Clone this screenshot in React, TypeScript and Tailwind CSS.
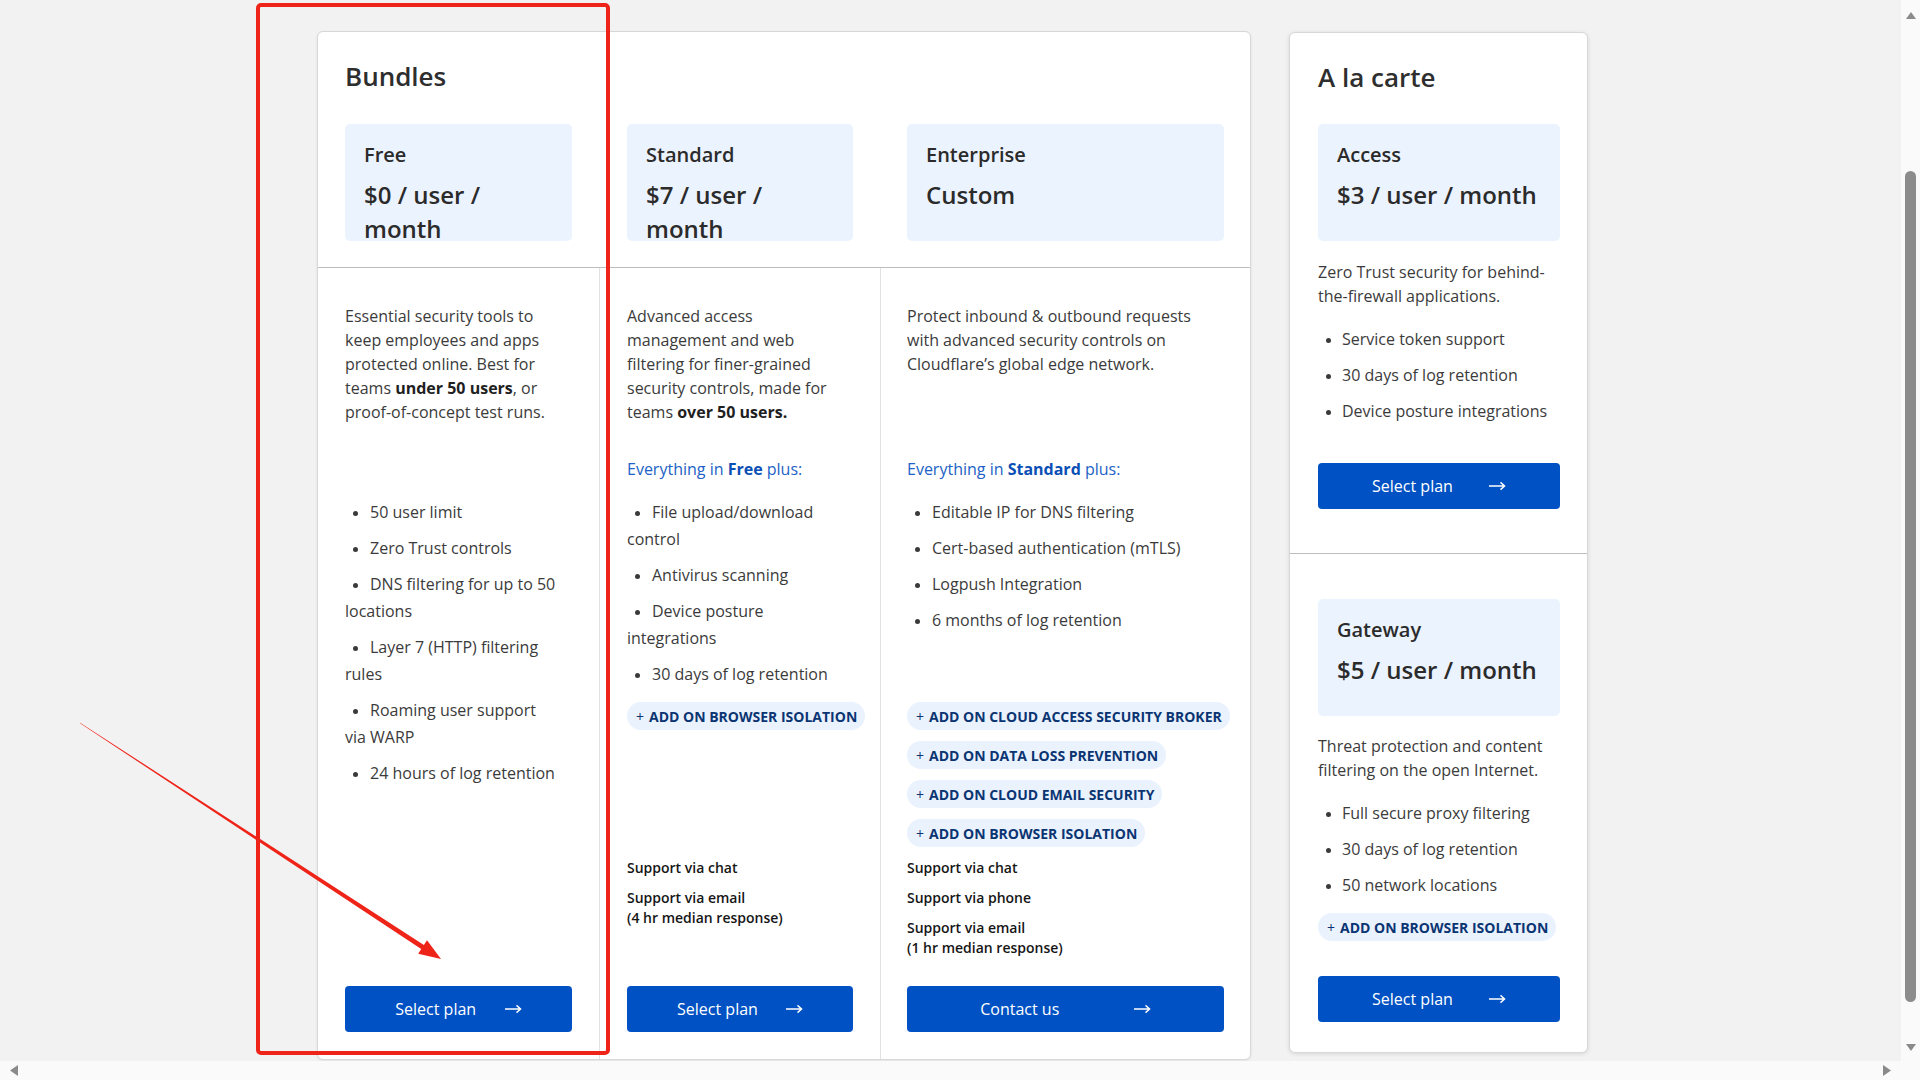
import React from "react";

const Arrow = () => (
  <svg width="17" height="10" viewBox="0 0 17 10" fill="none">
    <path d="M0 5h15.5M11.5 1.4L15.6 5l-4.1 3.6" stroke="white" strokeWidth="1.4" />
  </svg>
);

const Button = ({ label }: { label: string }) => (
  <div className="flex h-[46px] w-full items-center justify-around rounded-[4px] bg-[#0051c3] px-[36px] text-[16px] text-white">
    <span>{label}</span>
    <Arrow />
  </div>
);

const PriceBox = ({ title, price }: { title: string; price: React.ReactNode }) => (
  <div className="h-[117px] rounded-[5px] bg-[#ebf3fe] pl-[19px] pt-[17px] text-[#2b2b2b]">
    <div className="text-[20px] font-semibold leading-[28px]">{title}</div>
    <div className="mt-[9px] whitespace-nowrap text-[24px] font-semibold leading-[34px]">{price}</div>
  </div>
);

const Bullet = ({ children, w = "w-[25px]" }: { children: React.ReactNode; w?: string }) => (
  <li className="mb-[9px] whitespace-nowrap leading-[27px] last:mb-0">
    <span className={`inline-block pl-[8px] align-middle ${w}`}>
      <span className="block h-[5px] w-[5px] rounded-full bg-[#3a3a3a]" />
    </span>
    {children}
  </li>
);

const Pill = ({ text }: { text: string }) => (
  <div className="mb-[11px]">
    <div className="inline-flex h-[28px] items-center whitespace-nowrap rounded-full bg-[#eaf2fe] pl-[9px] pr-[8px] text-[14px] text-[#0a3572]">
      <span className="mr-[5px]">+</span>
      <span className="font-bold">{text}</span>
    </div>
  </div>
);

type Col = {
  desc: React.ReactNode;
  everything?: React.ReactNode;
  bullets: React.ReactNode[];
  pills: string[];
  support: React.ReactNode[];
  button: string;
  cls: string;
};

const cols: Col[] = [
  {
    cls: "px-[27px]",
    desc: (
      <>
        Essential security tools to
        <br />
        keep employees and apps
        <br />
        protected online. Best for
        <br />
        teams <b className="font-bold text-[#1f1f1f]">under 50 users</b>, or
        <br />
        proof-of-concept test runs.
      </>
    ),
    bullets: [
      "50 user limit",
      "Zero Trust controls",
      <>
        DNS filtering for up to 50
        <br />
        locations
      </>,
      <>
        Layer 7 (HTTP) filtering
        <br />
        rules
      </>,
      <>
        Roaming user support
        <br />
        via WARP
      </>,
      "24 hours of log retention",
    ],
    pills: [],
    support: [],
    button: "Select plan",
  },
  {
    cls: "border-l border-[#e2e2e2] pl-[27px] pr-[27px]",
    desc: (
      <>
        Advanced access
        <br />
        management and web
        <br />
        filtering for finer-grained
        <br />
        security controls, made for
        <br />
        teams <b className="font-bold text-[#1f1f1f]">over 50 users.</b>
      </>
    ),
    everything: (
      <>
        Everything in <b className="font-bold text-[#0a4fb5]">Free</b> plus:
      </>
    ),
    bullets: [
      <>
        File upload/download
        <br />
        control
      </>,
      "Antivirus scanning",
      <>
        Device posture
        <br />
        integrations
      </>,
      "30 days of log retention",
    ],
    pills: ["ADD ON BROWSER ISOLATION"],
    support: [
      "Support via chat",
      <>
        Support via email
        <br />
        (4 hr median response)
      </>,
    ],
    button: "Select plan",
  },
  {
    cls: "border-l border-[#e2e2e2] pl-[26px] pr-[26px]",
    desc: (
      <>
        Protect inbound &amp; outbound requests
        <br />
        with advanced security controls on
        <br />
        Cloudflare’s global edge network.
      </>
    ),
    everything: (
      <>
        Everything in <b className="font-bold text-[#0a4fb5]">Standard</b> plus:
      </>
    ),
    bullets: [
      "Editable IP for DNS filtering",
      "Cert-based authentication (mTLS)",
      "Logpush Integration",
      "6 months of log retention",
    ],
    pills: [
      "ADD ON CLOUD ACCESS SECURITY BROKER",
      "ADD ON DATA LOSS PREVENTION",
      "ADD ON CLOUD EMAIL SECURITY",
      "ADD ON BROWSER ISOLATION",
    ],
    support: [
      "Support via chat",
      "Support via phone",
      <>
        Support via email
        <br />
        (1 hr median response)
      </>,
    ],
    button: "Contact us",
  },
];

const BodyCol = ({ c }: { c: Col }) => (
  <div className={`flex flex-col pt-[36px] pb-[27px] ${c.cls}`}>
    <p className="h-[120px] whitespace-nowrap text-[16px] leading-[24px] text-[#3b3b3b]">{c.desc}</p>
    <div className="mt-[33px] h-[24px] whitespace-nowrap text-[16px] leading-[24px] text-[#2262c6]">{c.everything}</div>
    <ul className="mt-[18px] h-[203px] text-[16px] text-[#3b3b3b]">
      {c.bullets.map((b, i) => (
        <Bullet key={i}>{b}</Bullet>
      ))}
    </ul>
    <div className="h-[156px]">
      {c.pills.map((p) => (
        <Pill key={p} text={p} />
      ))}
    </div>
    <div className="h-[128px] text-[14px] font-semibold leading-[20px] text-[#161616]">
      {c.support.map((s, i) => (
        <div key={i} className="mb-[10px] whitespace-nowrap">
          {s}
        </div>
      ))}
    </div>
    <Button label={c.button} />
  </div>
);

const BundlesCard = () => (
  <div className="flex w-[934px] shrink-0 flex-col rounded-[6px] border border-[#d8d8d8] bg-white shadow-[0_1px_3px_rgba(0,0,0,0.08)]">
    <div className="border-b border-[#bdbdbd] pt-[28px] pb-[26px]">
      <h2 className="pl-[27px] text-[26px] font-semibold leading-[32px] text-[#2e2e2e]">Bundles</h2>
      <div className="mt-[32px] grid grid-cols-[281px_281px_370px]">
        <div className="px-[27px]">
          <PriceBox
            title="Free"
            price={
              <>
                $0 / user /
                <br />
                month
              </>
            }
          />
        </div>
        <div className="pl-[28px] pr-[27px]">
          <PriceBox
            title="Standard"
            price={
              <>
                $7 / user /
                <br />
                month
              </>
            }
          />
        </div>
        <div className="pl-[27px] pr-[26px]">
          <PriceBox title="Enterprise" price="Custom" />
        </div>
      </div>
    </div>
    <div className="grid grid-cols-[281px_281px_370px]">
      {cols.map((c, i) => (
        <BodyCol key={i} c={c} />
      ))}
    </div>
  </div>
);

const ALaCarteCard = () => (
  <div className="mt-[1px] flex w-[299px] shrink-0 flex-col rounded-[6px] border border-[#d8d8d8] bg-white shadow-[0_1px_4px_rgba(0,0,0,0.12)]">
    <div className="border-b border-[#bdbdbd] pl-[28px] pr-[27px] pt-[28px] pb-[44px]">
      <h2 className="text-[26px] font-semibold leading-[32px] text-[#2e2e2e]">A la carte</h2>
      <div className="mt-[31px]">
        <PriceBox title="Access" price="$3 / user / month" />
      </div>
      <p className="mt-[19px] whitespace-nowrap text-[16px] leading-[24px] text-[#3b3b3b]">
        Zero Trust security for behind-
        <br />
        the-firewall applications.
      </p>
      <ul className="mt-[18px] text-[16px] text-[#3b3b3b]">
        <Bullet w="w-[24px]">Service token support</Bullet>
        <Bullet w="w-[24px]">30 days of log retention</Bullet>
        <Bullet w="w-[24px]">Device posture integrations</Bullet>
      </ul>
      <div className="mt-[38px]">
        <Button label="Select plan" />
      </div>
    </div>
    <div className="pl-[28px] pr-[27px] pt-[45px] pb-[30px]">
      <PriceBox title="Gateway" price="$5 / user / month" />
      <p className="mt-[18px] whitespace-nowrap text-[16px] leading-[24px] text-[#3b3b3b]">
        Threat protection and content
        <br />
        filtering on the open Internet.
      </p>
      <ul className="mt-[18px] text-[16px] text-[#3b3b3b]">
        <Bullet w="w-[24px]">Full secure proxy filtering</Bullet>
        <Bullet w="w-[24px]">30 days of log retention</Bullet>
        <Bullet w="w-[24px]">50 network locations</Bullet>
      </ul>
      <div className="mt-[14px]">
        <Pill text="ADD ON BROWSER ISOLATION" />
      </div>
      <div className="mt-[35px]">
        <Button label="Select plan" />
      </div>
    </div>
  </div>
);

const Tri = ({ dir }: { dir: "up" | "down" | "left" | "right" }) => {
  const pts =
    dir === "up"
      ? "0,7 5,0 10,7"
      : dir === "down"
      ? "0,0 10,0 5,7"
      : dir === "left"
      ? "8,0 8,11 0,5.5"
      : "0,0 8,5.5 0,11";
  const w = dir === "up" || dir === "down" ? 10 : 8;
  const h = dir === "up" || dir === "down" ? 7 : 11;
  return (
    <svg width={w} height={h} viewBox={`0 0 ${w} ${h}`}>
      <polygon points={pts} fill="#8a8a8a" />
    </svg>
  );
};

export default function App() {
  return (
    <div className="relative flex h-[1080px] w-[1920px] flex-col overflow-hidden bg-[#f2f2f2] font-['Open_Sans','Segoe_UI',sans-serif]">
      <div className="flex min-h-0 flex-1">
        <main className="flex min-w-0 flex-1 items-start gap-[38px] overflow-hidden pl-[317px] pt-[31px]">
          <BundlesCard />
          <ALaCarteCard />
        </main>
        <div className="flex w-[19px] flex-col items-center bg-[#fafafa]">
          <div className="flex h-[30px] items-center justify-center">
            <Tri dir="up" />
          </div>
          <div className="mt-[141px] h-[831px] w-[11px] rounded-full bg-[#8c8c8c]" />
          <div className="flex-1" />
          <div className="flex h-[28px] items-center justify-center">
            <Tri dir="down" />
          </div>
        </div>
      </div>
      <div className="flex h-[19px] items-center justify-between bg-[#fafafa] pl-[10px] pr-[29px]">
        <Tri dir="left" />
        <Tri dir="right" />
      </div>
      <svg className="pointer-events-none absolute inset-0" width="1920" height="1080" viewBox="0 0 1920 1080">
        <rect x="258" y="5" width="350" height="1048" rx="3" fill="none" stroke="#ef2419" strokeWidth="4" />
        <polygon
          points="80,722.7 423.9,944.9 427,940.2 441,959 418.2,953.7 421.2,949 80,723.3"
          fill="#ef2419"
        />
      </svg>
    </div>
  );
}
